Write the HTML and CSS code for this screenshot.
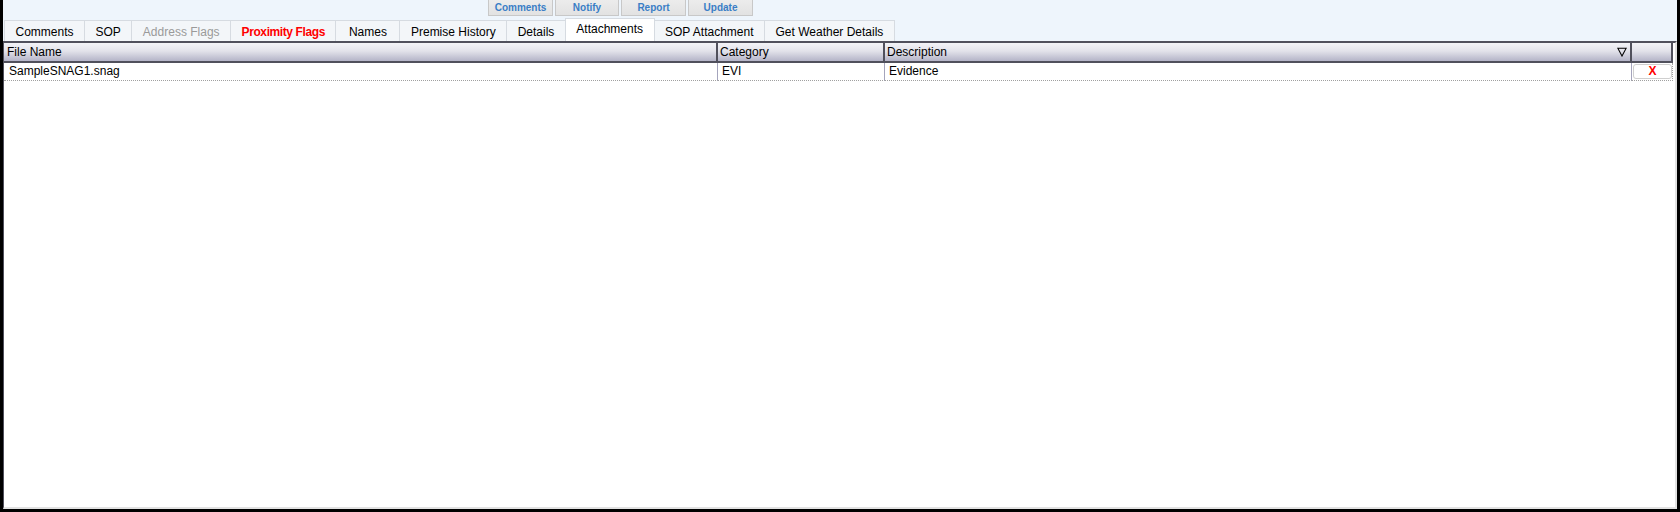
FILE: index.html
```html
<!DOCTYPE html>
<html>
<head>
<meta charset="utf-8">
<link rel="stylesheet" href="styles.css">
</head>
<body>
<div class="window">
  <div class="toolbar">
    <button class="tbtn">Comments</button>
    <button class="tbtn">Notify</button>
    <button class="tbtn">Report</button>
    <button class="tbtn">Update</button>
  </div>
  <div class="tabs">
    <div class="tab">Comments</div>
    <div class="tab">SOP</div>
    <div class="tab tab-disabled">Address Flags</div>
    <div class="tab tab-alert">Proximity Flags</div>
    <div class="tab tab-wide">Names</div>
    <div class="tab">Premise History</div>
    <div class="tab">Details</div>
    <div class="tab tab-active">Attachments</div>
    <div class="tab">SOP Attachment</div>
    <div class="tab">Get Weather Details</div>
  </div>
  <div class="grid">
    <div class="table">
      <div class="hcell">File Name</div>
      <div class="hcell">Category</div>
      <div class="hcell hcell-sort"><span>Description</span>
        <svg class="sort" width="10" height="10" viewBox="0 0 10 10"><path d="M0.8 1.2 H9.2 L5 9 Z" fill="none" stroke="#000" stroke-width="1.1"/></svg>
      </div>
      <div class="hcell hcell-last"></div>
      <div class="cell">SampleSNAG1.snag</div>
      <div class="cell">EVI</div>
      <div class="cell">Evidence</div>
      <div class="cell cell-last"><button class="del">X</button></div>
    </div>
  </div>
</div>
</body>
</html>
```
FILE: styles.css
```css
* { box-sizing: border-box; }
html, body { margin: 0; padding: 0; }
body {
  width: 1680px;
  height: 512px;
  background: #000;
  font-family: "Liberation Sans", Arial, sans-serif;
  font-size: 12px;
  color: #000;
  overflow: hidden;
}
.window {
  margin-left: 3px;
  width: 1674px;
  height: 509px;
  background: #eef5fc;
  display: flex;
  flex-direction: column;
}
.toolbar {
  height: 18px;
  display: flex;
  gap: 2px;
  padding-left: 485px;
  align-items: flex-start;
}
.tbtn {
  height: 16px;
  margin: 0;
  padding: 0;
  border: 1px solid #c8c8c8;
  border-top: none;
  background: linear-gradient(#ececec, #e2e2e2);
  color: #3a7ec6;
  font-family: "Liberation Sans", Arial, sans-serif;
  font-size: 10px;
  font-weight: bold;
  width: 65px;
  line-height: 13px;
}
.tbtn:nth-child(2) { width: 64px; }
.tabs {
  height: 23px;
  display: flex;
  align-items: flex-end;
  padding-left: 1px;
}
.tab {
  height: 21px;
  padding: 0 10.5px;
  border: 1px solid #d6dbe1;
  border-bottom: none;
  border-left: none;
  background: #f3f6f9;
  line-height: 22px;
  white-space: nowrap;
}
.tab:first-child { border-left: 1px solid #d6dbe1; }
.tab-wide { padding: 0 12.5px; }
.tab-disabled { color: #9a9a9a; }
.tab-alert { color: #ff0000; font-weight: bold; letter-spacing: -0.4px; }
.tab-active {
  height: 23px;
  background: #fff;
  line-height: 20px;
  border-left: 1px solid #d6dbe1;
  margin-left: -1px;
}
.grid {
  flex: 1;
  background: #fff;
  border-top: 2px solid #50505c;
  border-left: 1px solid #50505c;
  border-right: 2px solid #e2e2e2;
  border-bottom: 2px solid #e2e2e2;
}
.table {
  display: grid;
  grid-template-columns: 714px 167px 747px 41px;
  grid-template-rows: 20px 18px;
}
.hcell {
  background: linear-gradient(#f3f3f7, #e2e2ea 45%, #b4b4c8);
  border-bottom: 2px solid #50505c;
  border-right: 2px solid #50505c;
  padding-left: 2px;
  line-height: 18px;
  white-space: nowrap;
}
.hcell:first-child { padding-left: 3px; }
.hcell-sort {
  display: flex;
  justify-content: space-between;
  align-items: center;
  padding-right: 3px;
}
.hcell-sort span { line-height: 18px; }
.sort { display: block; }
.cell {
  border-right: 1px solid #a4a4bc;
  border-bottom: 1px dotted #a0a0a0;
  padding-left: 4px;
  line-height: 17px;
  white-space: nowrap;
}
.cell:nth-child(5) { padding-left: 5px; }
.cell-last {
  border-right: 1px dotted #a0a0a0;
  padding: 1px 1px 1px 1px;
}
.del {
  display: block;
  width: 39px;
  height: 15px;
  margin: 0;
  padding: 0;
  border: 1px solid #cfcfcf;
  border-radius: 3px;
  background: #fff;
  color: #ff0000;
  font-family: "Liberation Sans", Arial, sans-serif;
  font-size: 12px;
  font-weight: bold;
  line-height: 13px;
}
```
